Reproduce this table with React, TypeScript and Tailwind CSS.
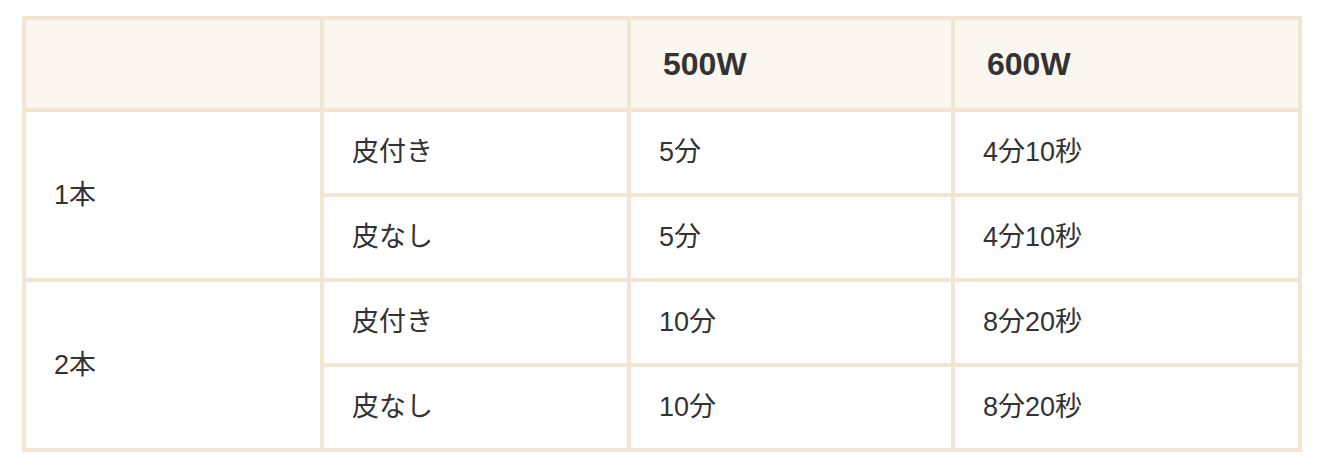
import React from "react";

const font = {
  fontFamily: '"Liberation Sans", "Noto Sans CJK JP", sans-serif',
};

const rows = [
  { group: "1本", items: [["皮付き", "5分", "4分10秒"], ["皮なし", "5分", "4分10秒"]] },
  { group: "2本", items: [["皮付き", "10分", "8分20秒"], ["皮なし", "10分", "8分20秒"]] },
];

export default function App() {
  return (
    <div className="w-[1332px] h-[472px] bg-white pt-[16px] pl-[22px]" style={font}>
      <table className="border-collapse table-fixed w-[1280px] text-[#333333]">
        <colgroup>
          <col className="w-[298px]" />
          <col className="w-[307px]" />
          <col className="w-[324px]" />
          <col className="w-[347px]" />
        </colgroup>
        <thead>
          <tr className="h-[92px] bg-[#fbf6ef]">
            <th className="border-4 border-[#f2e6d3]"></th>
            <th className="border-4 border-[#f2e6d3]"></th>
            <th className="border-4 border-[#f2e6d3] text-left pl-[32px] text-[32px] font-bold">500W</th>
            <th className="border-4 border-[#f2e6d3] text-left pl-[32px] text-[32px] font-bold">600W</th>
          </tr>
        </thead>
        <tbody className="text-[27px]">
          {rows.map((g) =>
            g.items.map((it, i) => (
              <tr key={g.group + i} className="h-[85px]">
                {i === 0 && (
                  <td rowSpan={2} className="border-4 border-[#f2e6d3] pl-[28px]">
                    {g.group}
                  </td>
                )}
                <td className="border-4 border-[#f2e6d3] pl-[28px]">{it[0]}</td>
                <td className="border-4 border-[#f2e6d3] pl-[28px]">{it[1]}</td>
                <td className="border-4 border-[#f2e6d3] pl-[28px]">{it[2]}</td>
              </tr>
            ))
          )}
        </tbody>
      </table>
    </div>
  );
}
